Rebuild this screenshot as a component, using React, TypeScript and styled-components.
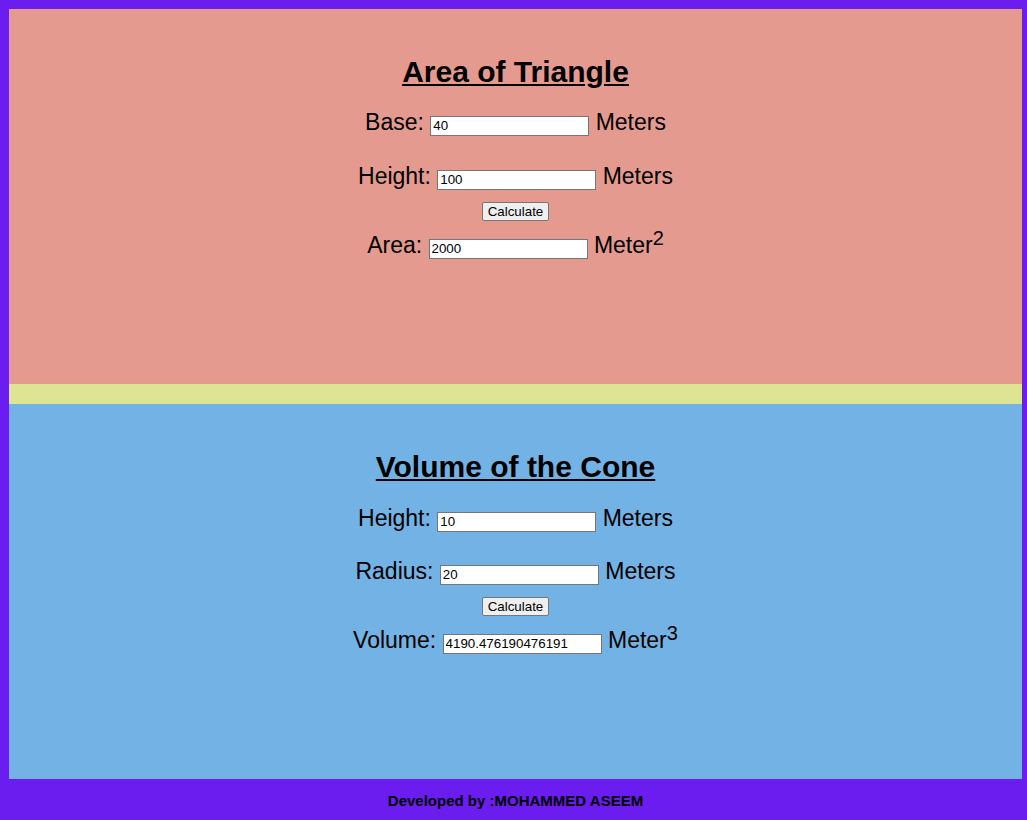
import React, { useState } from "react";
import styled, { createGlobalStyle } from "styled-components";

const Global = createGlobalStyle`
  html, body { margin: 0; padding: 0; background: #6b1cef; }
  body { font-family: "Liberation Sans", Arial, sans-serif; color: #000; }
`;

const Page = styled.div`
  padding: 9px 5px 0 9px;
  display: flex;
  flex-direction: column;
  height: 820px;
  box-sizing: border-box;
`;

const Panel = styled.section<{ $bg: string }>`
  background: ${(p) => p.$bg};
  height: 375px;
  box-sizing: border-box;
  padding-top: 45px;
  display: flex;
  flex-direction: column;
  align-items: center;
`;

const Divider = styled.div`
  height: 20px;
  background: #dde595;
`;

const Title = styled.h2`
  margin: 0;
  font-size: 30px;
  line-height: 36px;
  height: 36px;
  font-weight: bold;
  text-decoration: underline;
  text-decoration-thickness: 2px;
  text-underline-offset: 2px;
`;

const Row = styled.div<{ $mt: number }>`
  margin-top: ${(p) => p.$mt}px;
  height: 26px;
  line-height: 26px;
  font-size: 23px;
  text-align: center;
  white-space: nowrap;
`;

const Field = styled.input`
  box-sizing: border-box;
  width: 159px;
  height: 20px;
  padding: 1px 2px;
  border: 1px solid #767676;
  border-radius: 0;
  background: #fff;
  font-family: "Liberation Sans", Arial, sans-serif;
  font-size: 13.33px;
  color: #000;
  vertical-align: baseline;
`;

const Button = styled.button<{ $mt: number }>`
  margin-top: ${(p) => p.$mt}px;
  height: 19px;
  box-sizing: border-box;
  padding: 0 5px;
  border: 1px solid #767676;
  border-radius: 2px;
  background: #efefef;
  font-family: "Liberation Sans", Arial, sans-serif;
  font-size: 13.33px;
  color: #000;
  line-height: 15px;
`;

const Sup = styled.sup`
  font-size: 20px;
  line-height: 0;
  vertical-align: 8px;
`;

const Footer = styled.footer`
  flex: 1;
  display: flex;
  align-items: center;
  justify-content: center;
  padding-top: 2px;
  font-size: 15px;
  font-weight: bold;
  color: #000;
`;

export default function App() {
  const [base, setBase] = useState("40");
  const [height, setHeight] = useState("100");
  const [area, setArea] = useState("2000");
  const [ch, setCh] = useState("10");
  const [r, setR] = useState("20");
  const [vol, setVol] = useState("4190.476190476191");

  return (
    <>
      <Global />
      <Page>
        <Panel $bg="#e59a8f">
          <Title>Area of Triangle</Title>
          <Row $mt={19}>
            Base: <Field value={base} onChange={(e) => setBase(e.target.value)} /> Meters
          </Row>
          <Row $mt={28}>
            Height: <Field value={height} onChange={(e) => setHeight(e.target.value)} /> Meters
          </Row>
          <Button $mt={13} onClick={() => setArea(String((Number(base) * Number(height)) / 2))}>
            Calculate
          </Button>
          <Row $mt={11}>
            Area: <Field value={area} readOnly /> Meter<Sup>2</Sup>
          </Row>
        </Panel>
        <Divider />
        <Panel $bg="#72b2e4">
          <Title>Volume of the Cone</Title>
          <Row $mt={20}>
            Height: <Field value={ch} onChange={(e) => setCh(e.target.value)} /> Meters
          </Row>
          <Row $mt={27}>
            Radius: <Field value={r} onChange={(e) => setR(e.target.value)} /> Meters
          </Row>
          <Button
            $mt={13}
            onClick={() => setVol(String(((22 / 7) * Number(r) * Number(r) * Number(ch)) / 3))}
          >
            Calculate
          </Button>
          <Row $mt={11}>
            Volume: <Field value={vol} readOnly /> Meter<Sup>3</Sup>
          </Row>
        </Panel>
        <Footer>Developed by :MOHAMMED ASEEM</Footer>
      </Page>
    </>
  );
}
